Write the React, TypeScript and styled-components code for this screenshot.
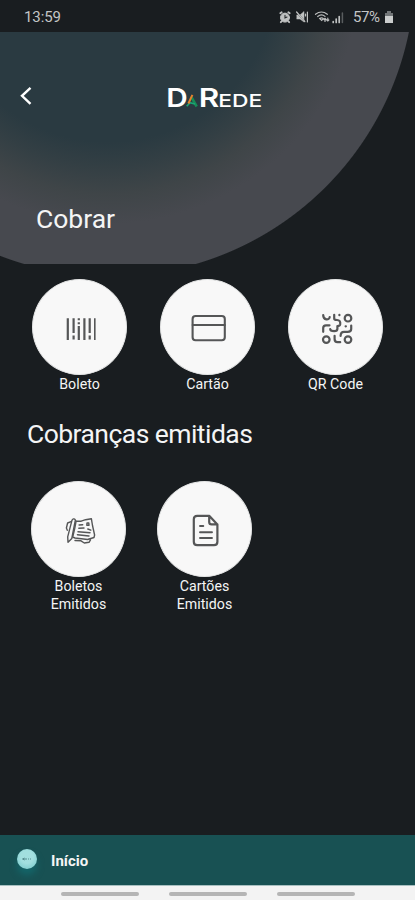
import React from "react";
import styled, { createGlobalStyle } from "styled-components";

const Global = createGlobalStyle`
  body { margin: 0; background: #191d20; }
  * { box-sizing: border-box; }
`;

const Screen = styled.main`
  width: 415px;
  height: 900px;
  overflow: hidden;
  display: flex;
  flex-direction: column;
  background: #191d20;
  color: #f4f5f5;
  font-family: Roboto, sans-serif;
`;

const StatusBar = styled.div`
  flex: none;
  height: 32px;
  padding: 1px 21px 0 24px;
  display: flex;
  align-items: center;
  justify-content: space-between;
  font-size: 15px;
  letter-spacing: -0.1px;
  color: #c3c5c6;
`;

const StatusIcons = styled.div`
  display: flex;
  align-items: center;
  svg { display: block; }
`;

const Battery = styled.span`
  width: 28px;
  margin: 0 3px 0 8px;
  padding-top: 1px;
  font-size: 15px;
  letter-spacing: -0.4px;
`;

const Header = styled.header`
  flex: none;
  height: 232px;
  background:
    radial-gradient(circle at 110px -60.7px, transparent 304.5px, #191d20 305.5px),
    radial-gradient(
      circle at 108px -60px,
      #2a3a41 0, #2a3a41 170px, #333f44 194px, #3f4548 222px, #47494f 252px
    );
`;

const TopRow = styled.div`
  display: flex;
  height: 168px;
  padding-top: 48px;
  svg { display: block; }
`;

const BackButton = styled.button`
  width: 160px;
  height: 32px;
  padding: 0 0 0 16px;
  border: 0;
  background: none;
`;

const Title = styled.h1<{ $left: number; $spacing?: number }>`
  margin: 0 0 0 ${(p) => p.$left}px;
  font-size: 26.5px;
  line-height: 38px;
  font-weight: 400;
  letter-spacing: ${(p) => p.$spacing ?? 0}px;
  white-space: nowrap;
`;

const Actions = styled.section<{ $left: number; $gap: number; $top: number }>`
  display: flex;
  gap: ${(p) => p.$gap}px;
  padding: ${(p) => p.$top}px 0 0 ${(p) => p.$left}px;
`;

const Action = styled.div`
  width: 95px;
  text-align: center;
  font-size: 14.2px;
  line-height: 17.5px;
  white-space: pre-line;
`;

const Disc = styled.div`
  width: 95px;
  height: 96px;
  margin-bottom: 1px;
  border-radius: 50%;
  background: #f8f8f8;
  border: 1px solid #e4e5e5;
  svg { display: block; margin: -1px; }
`;

const Content = styled.div`
  flex: 1;
`;

const Section = styled.div`
  height: 151px;
`;

const Footer = styled.nav`
  flex: none;
  height: 50px;
  display: flex;
  align-items: center;
  gap: 14px;
  padding-left: 17px;
  background: #185153;
  font-size: 15px;
  font-weight: 700;
  line-height: 20px;
`;

const FooterLabel = styled.span`
  padding-top: 2px;
`;

const Orb = styled.span`
  width: 20px;
  height: 20px;
  margin-top: -3px;
  border-radius: 50%;
  background: radial-gradient(circle at 50% 40%, #a2dfdf 0 40%, #87d2d3 72%, #a1dcdc 100%);
  box-shadow: 0 6px 7px #14666a;
  svg { display: block; }
`;

const SystemBar = styled.div`
  flex: none;
  height: 15px;
  display: flex;
  gap: 30px;
  padding: 6px 0 0 61px;
  background: #f3f3f3;
  border-top: 1px solid #a8c0c1;
`;

const Handle = styled.i`
  width: 78px;
  height: 4px;
  border-radius: 2px;
  background: #b5b5b5;
`;

const ink = "#555657";

function Icon({ x, y, children }: { x: number; y: number; children: React.ReactNode }) {
  return (
    <svg width="96" height="96" viewBox={`${x} ${y} 96 96`} fill="none" stroke={ink} strokeLinecap="round" strokeLinejoin="round">
      {children}
    </svg>
  );
}

const Barcode = () => (
  <Icon x={-18} y={-21}>
    <g strokeWidth="2.2" strokeLinecap="butt">
      <path d="M17.8 18.3V40M23.6 18.3V33M23.6 35.5V39.5M28.8 18.3V20.3M28.8 22.3V24.2M28.8 26V40M34.4 18.3V40M39.7 18.3V33M39.7 35.5V39.5" />
      <path d="M44.8 18.3V40" strokeWidth="1.6" />
    </g>
  </Icon>
);

const Card = () => (
  <Icon x={-20} y={-21}>
    <rect x="12.6" y="16" width="32.2" height="24.3" rx="3" strokeWidth="2.1" />
    <path d="M12.6 25H44.8" strokeWidth="2" />
  </Icon>
);

const QrCode = () => (
  <Icon x={-20} y={-21}>
    <g strokeWidth="2.2">
      <circle cx="40" cy="18.2" r="3.3" />
      <circle cx="18.3" cy="39.6" r="3.3" />
      <circle cx="40" cy="39.6" r="3.3" />
      <path d="M15.2 15C15.2 20.5 21.5 20.5 21.7 17M15.2 31.8V28Q15.2 25.3 18 25.3H21.5M26.2 14.8V18.5Q26.2 20 29 20M31.4 14.8V15.2M29 20Q32.8 20.3 32.2 24.2Q31.8 26 29.4 26V28.7Q29.4 31.2 26.2 31.2Q22.2 31.2 22.2 29M37.6 26.3H37.9M43.2 25.6V29Q43.2 31.8 39.6 31.8H36Q32.6 31.8 32.6 36M26.6 35.8V39Q26.6 42.2 29.5 42.2H32.2" />
    </g>
  </Icon>
);

const Papers = () => (
  <Icon x={-19} y={-19}>
    <g strokeWidth="1.4">
      <path d="M25.4 20C24.3 18.2 22.5 18.7 21.8 20.8L17.7 36.8L18 42.2L21.8 38.5Z" />
      <path d="M21 21.6L17.6 23L16.4 28L17.3 30.3M26.1 21L24.7 28.5L22.7 37L25 38L37.6 39.5L44 37.5L44.6 35L42.5 25.5L41.4 18.8L35.6 19.7L31.2 21.2L26.1 21M25 40.5L31 40.8L34.3 43L39 42.3L40.5 39.8" />
      <path d="M29.1 25L32.7 24.7M28.8 28.3L34 28M28 31.7L40 32.8M27.4 34.7L39 36M37 23L38.8 23L39 25.2L36.8 25.3ZM37.8 29L40.8 30.2" />
    </g>
  </Icon>
);

const Document = () => (
  <Icon x={-19} y={-19}>
    <path d="M33.2 15.8H21.2Q17.8 15.8 17.8 19.2V41.8Q17.8 45.2 21.2 45.2H38Q41.4 45.2 41.4 41.8V24.4ZM33.2 15.8V22Q33.2 24.4 35.6 24.4H41.4" strokeWidth="2.2" />
    <path d="M24 26H27.3M24 32.2H36M24 38H36" strokeWidth="1.9" />
  </Icon>
);

const Logo = () => (
  <svg width="110" height="36" viewBox="0 0 110 36" fill="#ffffff" fontFamily="Inter, sans-serif">
    <text x="6.2" y="26.8" fontSize="25.5" fontWeight="600" textLength="21.5" lengthAdjust="spacingAndGlyphs">D</text>
    <g fill="none">
      <path d="M31 16.5L36.7 26.5" stroke="#168c57" strokeWidth="2.6" />
      <path d="M26.7 26.3L30 22.6L35 24" stroke="#1ba574" strokeWidth="1.7" />
      <path d="M28.4 23.5L32.4 14.8" stroke="#e5812b" strokeWidth="2" />
    </g>
    <text x="38.8" y="26.8" fontSize="25.5" fontWeight="600" textLength="20.5" lengthAdjust="spacingAndGlyphs">R</text>
    <text x="58.3" y="26.8" fontSize="17.5" fontWeight="500" textLength="44" lengthAdjust="spacingAndGlyphs">EDE</text>
  </svg>
);

const StatusGlyphs = () => (
  <svg width="67" height="18" viewBox="278 7 67 18" fill="none" stroke="#bfc1c1" strokeLinecap="round">
    <circle cx="285" cy="16.6" r="4.5" fill="#bfc1c1" />
    <path d="M280.3 12.3L281.7 11.2M288.3 11.2L289.7 12.3M281.5 20.5L280.8 21.2M288.5 20.5L289.2 21.2" strokeWidth="1.8" />
    <path d="M285 14.4V16.9L287 16" stroke="#25292b" strokeWidth="1.1" />
    <path d="M297 14H300L304 10.5V21L300 18H297Z" fill="#bfc1c1" strokeWidth=".5" />
    <path d="M296.5 11L305.3 21" stroke="#25292b" strokeWidth="1.3" />
    <path d="M296.6 11L304.8 20.5M307.4 11V21M305.5 13V15" strokeWidth="1.2" />
    <path d="M315.5 13.3Q321.5 8.7 327.3 13.3M317.7 15.5Q321.5 12.5 325 15.4M319.7 17.5Q321.6 16 323.4 17.6L321.7 19.5ZM325 20.5V17.5M324 18.5L325 17.4L326 18.5M327.8 17V20M326.8 19L327.8 20L328.8 19" strokeWidth="1.2" />
    <path d="M333.2 20.5V21.5M336.2 18V21.5M339.2 15.5V21.5" strokeWidth="1.7" />
    <path d="M342.4 12V21.5" stroke="#595d5f" strokeWidth="1.5" />
  </svg>
);

const BatteryGlyph = () => (
  <svg width="10" height="14" viewBox="0 0 10 14">
    <path d="M3 1H7V3H9V13H1V3H3Z" fill="#727678" />
    <path d="M1 6H9V13H1Z" fill="#cbcdcd" />
  </svg>
);

const charges = [
  { label: "Boleto", icon: <Barcode /> },
  { label: "Cartão", icon: <Card /> },
  { label: "QR Code", icon: <QrCode /> },
];

const issued = [
  { label: "Boletos\nEmitidos", icon: <Papers /> },
  { label: "Cartões\nEmitidos", icon: <Document /> },
];

export default function App() {
  return (
    <Screen>
      <Global />
      <StatusBar>
        <span>13:59</span>
        <StatusIcons>
          <StatusGlyphs />
          <Battery>57%</Battery>
          <BatteryGlyph />
        </StatusIcons>
      </StatusBar>
      <Header>
        <TopRow>
          <BackButton aria-label="Voltar">
            <svg width="20" height="28" viewBox="0 0 20 28" fill="none" stroke="#fff" strokeWidth="2.4">
              <path d="M14.5 5.8L6 13.8L14.5 21.8" />
            </svg>
          </BackButton>
          <Logo />
        </TopRow>
        <Title $left={36}>Cobrar</Title>
      </Header>
      <Content>
        <Section>
          <Actions $left={32} $gap={33} $top={15}>
            {charges.map((item) => (
              <Action key={item.label}>
                <Disc>{item.icon}</Disc>
                {item.label}
              </Action>
            ))}
          </Actions>
        </Section>
        <Title $left={27} $spacing={-0.55} as="h2">Cobranças emitidas</Title>
        <Actions $left={31} $gap={31} $top={28}>
          {issued.map((item) => (
            <Action key={item.label}>
              <Disc>{item.icon}</Disc>
              {item.label}
            </Action>
          ))}
        </Actions>
      </Content>
      <Footer>
        <Orb>
          <svg width="20" height="20" viewBox="0 0 20 20" fill="none" stroke="#568e91">
            <path d="M7.5 9L5.5 10L7.5 11M6 10H10" />
            <path d="M11 10H14.5" strokeDasharray="1 1" />
          </svg>
        </Orb>
        <FooterLabel>Início</FooterLabel>
      </Footer>
      <SystemBar>
        <Handle />
        <Handle />
        <Handle />
      </SystemBar>
    </Screen>
  );
}
